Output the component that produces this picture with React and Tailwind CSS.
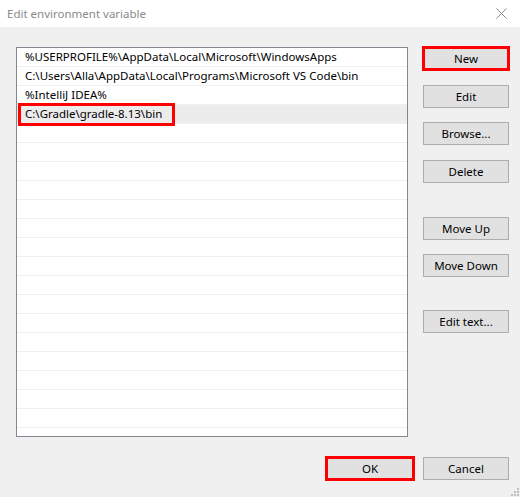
import React from "react";

const paths = [
  "%USERPROFILE%\\AppData\\Local\\Microsoft\\WindowsApps",
  "C:\\Users\\Alla\\AppData\\Local\\Programs\\Microsoft VS Code\\bin",
  "%IntelliJ IDEA%",
  "C:\\Gradle\\gradle-8.13\\bin",
];

const TOTAL_ROWS = 21;

function Button({ children, highlight, className = "" }) {
  return (
    <div className={`relative h-[23px] w-[86px] ${className}`}>
      <div className="flex h-full w-full items-center justify-center border border-[#adadad] bg-[#e1e1e1] text-[11.5px] text-black">
        {children}
      </div>
      {highlight && (
        <div className="pointer-events-none absolute -inset-[1px] border-[3px] border-[#ff0000]" />
      )}
    </div>
  );
}

export default function App() {
  const rows = Array.from({ length: TOTAL_ROWS }, (_, i) => paths[i] ?? "");
  return (
    <div
      className="flex h-[497px] w-[520px] flex-col overflow-hidden bg-[#f0f0f0]"
      style={{ fontFamily: '"Noto Sans", "Open Sans", sans-serif' }}
    >
      {/* title bar */}
      <div className="flex h-[27px] shrink-0 items-center justify-between bg-white pl-[7px] pr-[13px]">
        <span className="text-[11.5px] text-[#8a8a8a]">Edit environment variable</span>
        <svg width="11" height="11" viewBox="0 0 11 11" className="text-[#8a8a8a]">
          <path d="M0.5 0.5 L10.5 10.5 M10.5 0.5 L0.5 10.5" stroke="currentColor" strokeWidth="1" />
        </svg>
      </div>

      {/* body */}
      <div className="relative flex flex-1 flex-col">
        <div className="flex pl-[16px] pt-[20px]">
          {/* path list */}
          <div className="h-[390px] w-[392px] overflow-hidden border border-[#828790] bg-white">
            {rows.map((text, i) => (
              <div
                key={i}
                className={`relative flex h-[19px] items-center border-b border-[#f0f0f0] pl-[8px] text-[11.5px] leading-none text-black ${
                  i === 3 ? "bg-[#ececec]" : ""
                }`}
              >
                <span className="whitespace-nowrap">{text}</span>
                {i === 3 && (
                  <div className="pointer-events-none absolute left-[1px] top-[-2px] h-[23px] w-[157px] border-[3px] border-[#ff0000]" />
                )}
              </div>
            ))}
          </div>

          {/* action buttons */}
          <div className="ml-[15px] flex flex-col">
            <Button highlight>New</Button>
            <Button className="mt-[15px]">Edit</Button>
            <Button className="mt-[14px]">Browse...</Button>
            <Button className="mt-[15px]">Delete</Button>
            <Button className="mt-[34px]">Move Up</Button>
            <Button className="mt-[14px]">Move Down</Button>
            <Button className="mt-[33px]">Edit text...</Button>
          </div>
        </div>

        {/* dialog buttons */}
        <div className="mt-[20px] flex justify-end gap-[9px] pr-[11px]">
          <Button highlight className="w-[88px]">OK</Button>
          <Button>Cancel</Button>
        </div>

        {/* resize grip */}
        <svg width="9" height="9" viewBox="0 0 9 9" className="absolute bottom-[1px] right-[1px]">
          {[
            [7, 1],
            [4, 4],
            [7, 4],
            [1, 7],
            [4, 7],
            [7, 7],
          ].map(([x, y], i) => (
            <rect key={i} x={x} y={y} width="2" height="2" fill="#c0c0c0" />
          ))}
        </svg>
      </div>
    </div>
  );
}
